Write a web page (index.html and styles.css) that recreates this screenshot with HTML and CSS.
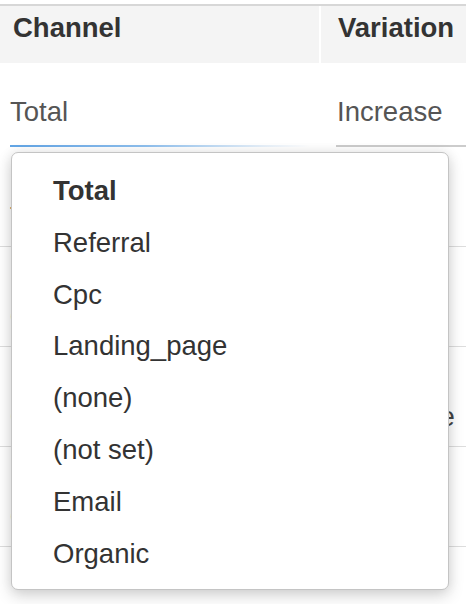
FILE: index.html
```html
<!DOCTYPE html>
<html>
<head>
<meta charset="utf-8">
<link rel="stylesheet" href="styles.css">
</head>
<body>
<div class="table">
  <div class="thead">
    <div class="th th-first">Channel</div>
    <div class="th th-second">Variation</div>
  </div>
  <div class="filter-row">
    <div class="cell cell-first">
      <div class="field field-focus">
        <span class="field-text">Total</span>
        <div class="menu">
          <ul class="menu-list">
            <li class="menu-item selected">Total</li>
            <li class="menu-item">Referral</li>
            <li class="menu-item">Cpc</li>
            <li class="menu-item">Landing_page</li>
            <li class="menu-item">(none)</li>
            <li class="menu-item">(not set)</li>
            <li class="menu-item">Email</li>
            <li class="menu-item">Organic</li>
          </ul>
        </div>
      </div>
    </div>
    <div class="cell cell-second">
      <div class="field field-plain">
        <span class="field-text">Increase</span>
      </div>
    </div>
  </div>
  <div class="row">
    <div class="td td-first">Total</div>
    <div class="td td-second">Increase</div>
  </div>
  <div class="row">
    <div class="td td-first">Organic</div>
    <div class="td td-second">Increase</div>
  </div>
  <div class="row">
    <div class="td td-first">Cpc</div>
    <div class="td td-second">Decrease</div>
  </div>
  <div class="row">
    <div class="td td-first">Organic</div>
    <div class="td td-second">Increase</div>
  </div>
</div>
</body>
</html>
```

FILE: styles.css
```css
* { box-sizing: border-box; }

html {
  overflow: hidden;
}

html, body {
  margin: 0;
  padding: 0;
  background: #ffffff;
  font-family: "Liberation Sans", Arial, Helvetica, sans-serif;
}

body {
  min-height: 604px;
}

.table {
  padding-top: 4px;
  width: 466px;
  min-height: 604px;
}

.thead {
  display: grid;
  grid-template-columns: 319px 1fr;
  column-gap: 2px;
  border-top: 2px solid #d7d7d7;
  background: #ffffff;
  height: 59px;
}

.th {
  background: #f4f4f4;
  font-weight: bold;
  font-size: 27.5px;
  line-height: 32px;
  color: #333333;
  padding-top: 6px;
  white-space: nowrap;
  overflow: hidden;
}

.th-first { padding-left: 13px; }
.th-second { padding-left: 17px; }

.filter-row {
  display: grid;
  grid-template-columns: 319px 1fr;
  column-gap: 2px;
  height: 84px;
}

.cell-first { padding-left: 10px; }
.cell-second { padding-left: 15px; }

.field {
  position: relative;
  padding-top: 33px;
  padding-bottom: 17px;
  height: 84px;
}

.field-text {
  display: block;
  font-size: 27.5px;
  line-height: 32px;
  color: #555555;
  white-space: nowrap;
}

.field-focus { width: 300px; }

.field-focus::after {
  content: "";
  position: absolute;
  left: 0;
  right: 0;
  bottom: 0;
  height: 2px;
  background: linear-gradient(to right, #62a6e6 0%, #8fc0ee 45%, #e8f1fa 85%, rgba(255,255,255,0) 100%);
}

.field-plain .field-text { padding-left: 1px; }

.field-plain::after {
  content: "";
  position: absolute;
  left: 0;
  right: 0;
  bottom: 0;
  height: 2px;
  background: #cccccc;
}

.row {
  display: grid;
  grid-template-columns: 321px 1fr;
  height: 100px;
  border-bottom: 1px solid #dddddd;
}

.td {
  font-size: 27.5px;
  line-height: 32px;
  color: #444444;
  padding-top: 54px;
  white-space: nowrap;
}

.td-first { padding-left: 10px; }
.td-second { padding-left: 16px; }

.menu {
  position: absolute;
  left: 1px;
  top: calc(100% + 5px);
  width: 438px;
  height: 438px;
  background: #ffffff;
  border: 1px solid #c4c4c4;
  border-radius: 7px;
  box-shadow: 0 6px 16px rgba(0, 0, 0, 0.16), 0 0 12px rgba(0, 0, 0, 0.08);
  z-index: 10;
}

.menu-list {
  list-style: none;
  margin: 0;
  padding: 12px 0 10px 41px;
}

.menu-item {
  font-size: 27.5px;
  line-height: 51.8px;
  color: #333333;
  white-space: nowrap;
}

.menu-item.selected { font-weight: bold; }
```
